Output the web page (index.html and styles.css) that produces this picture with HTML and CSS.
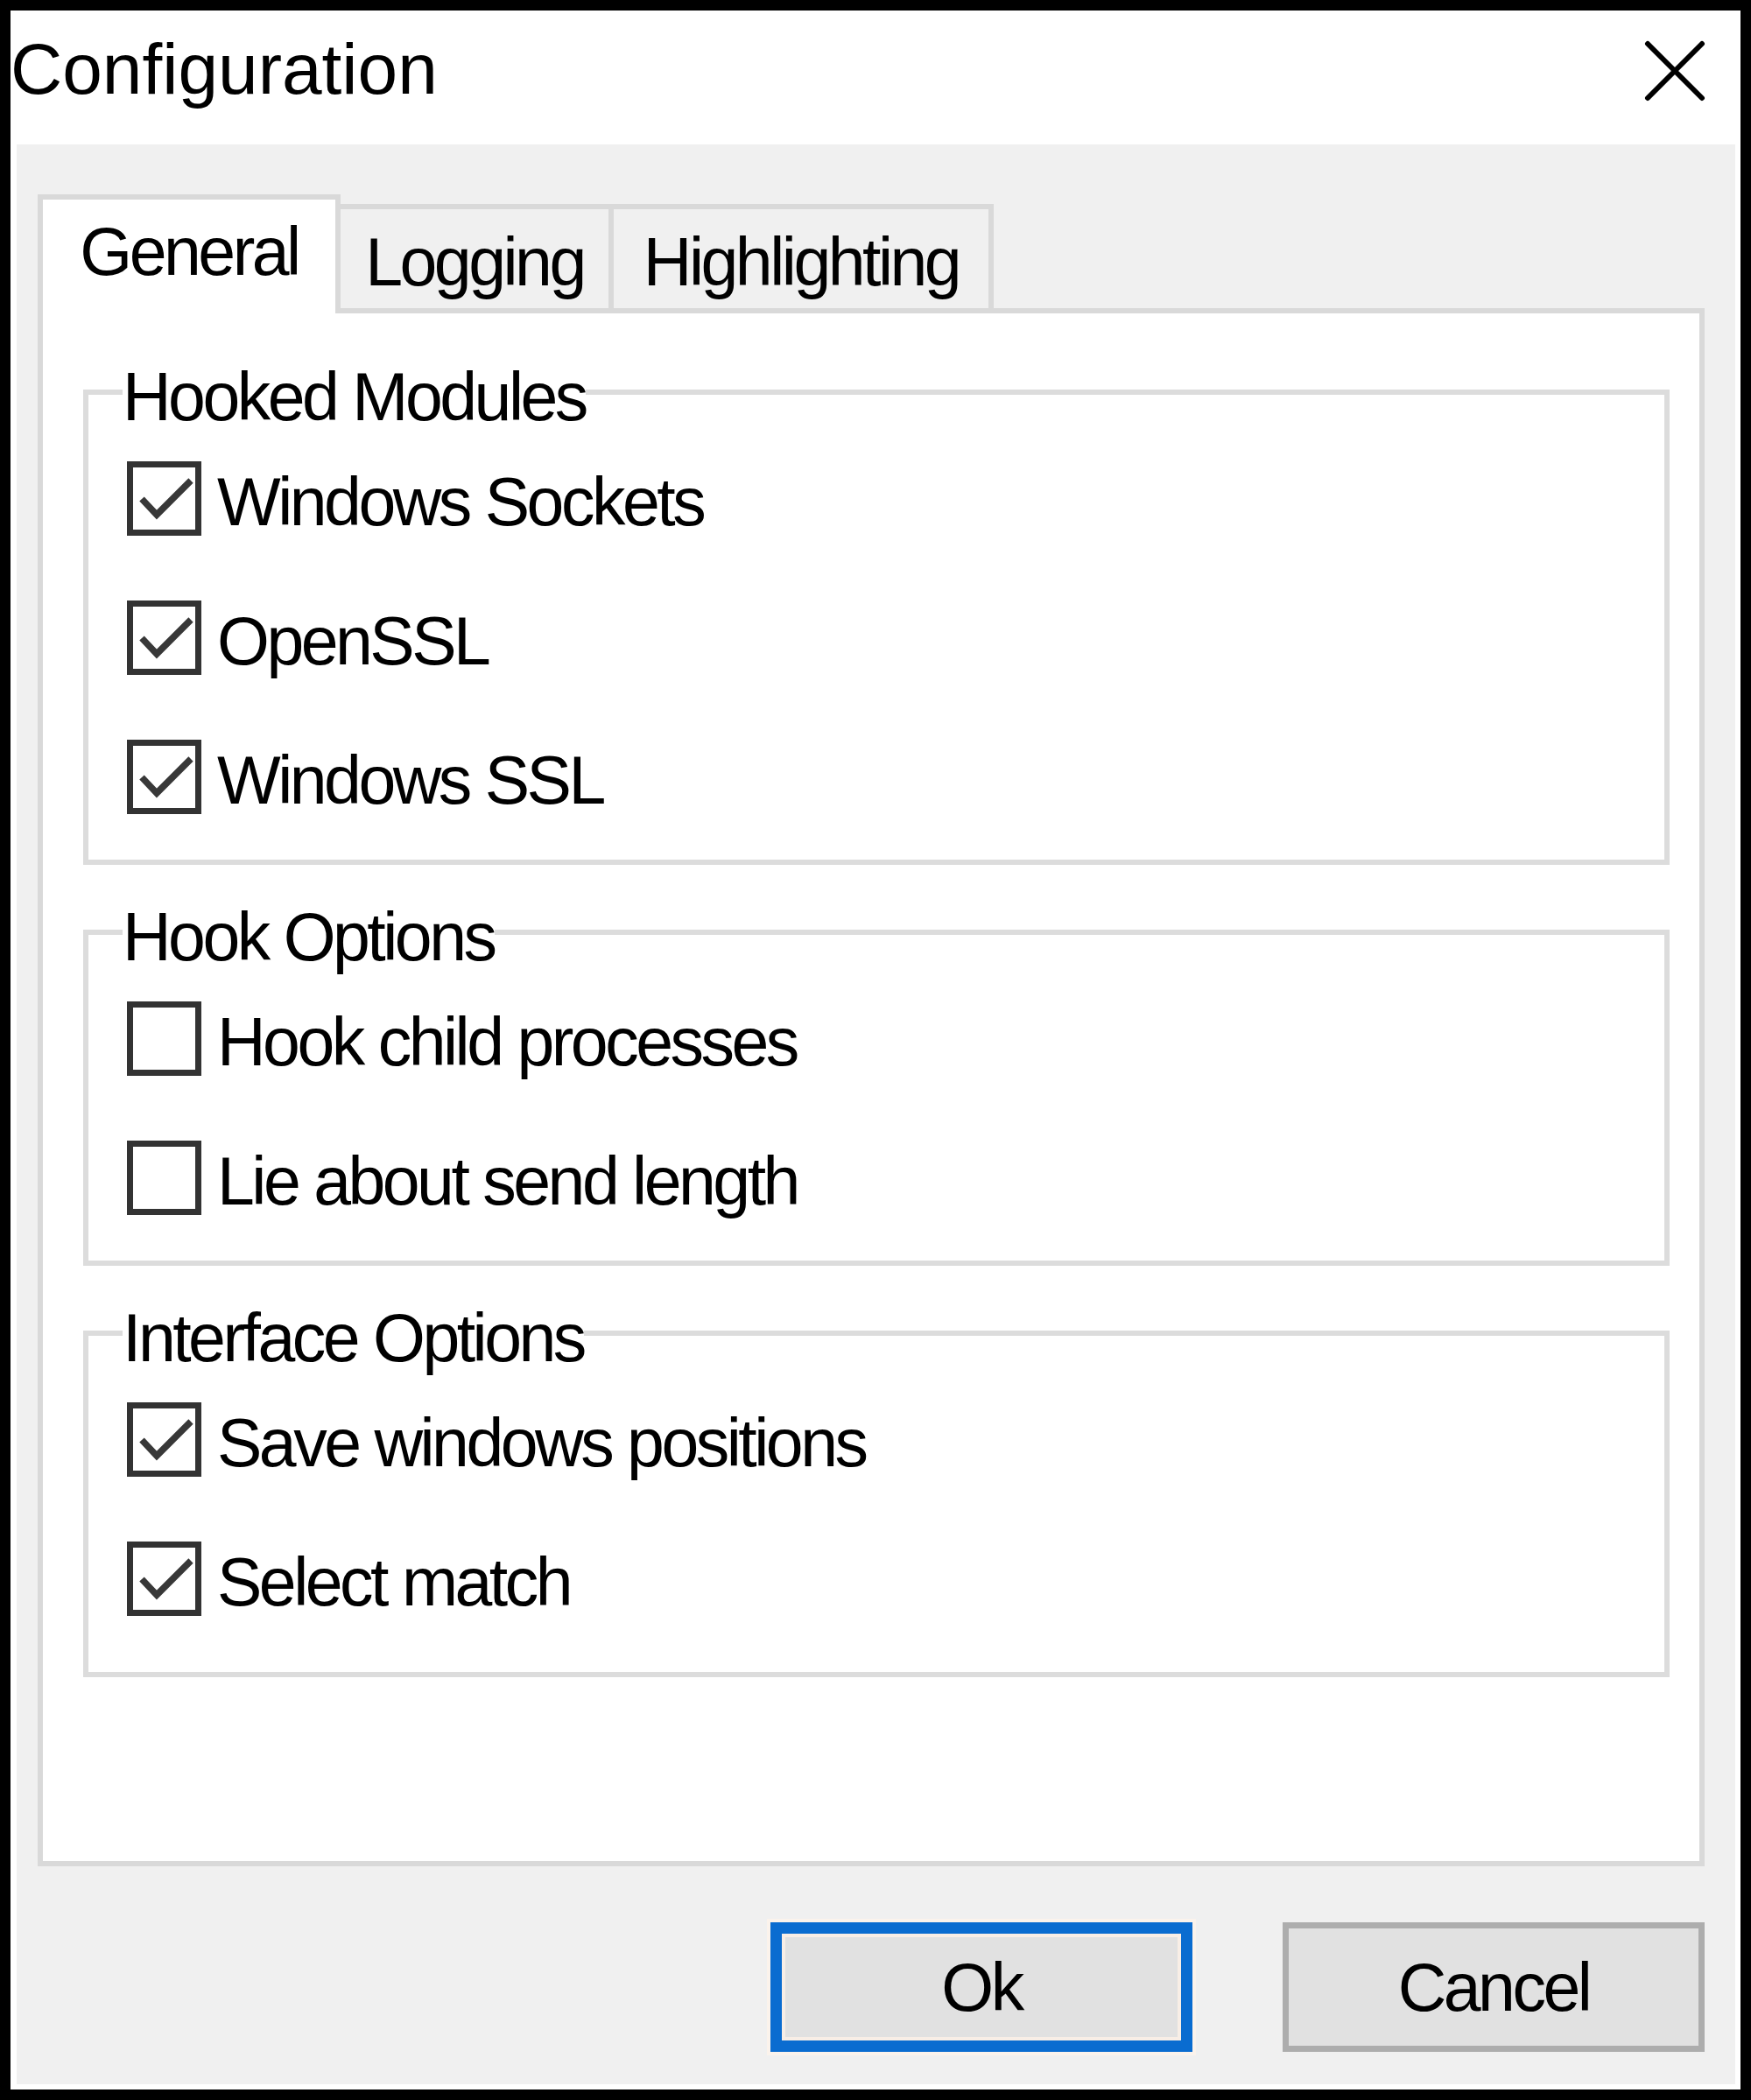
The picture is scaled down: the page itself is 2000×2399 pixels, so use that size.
FILE: index.html
```html
<!DOCTYPE html>
<html lang="en">
<head>
<meta charset="utf-8">
<title>Configuration</title>
<link rel="stylesheet" href="styles.css">
</head>
<body>
<div class="window">
  <div class="titlebar">
    <div class="title">Configuration</div>
    <svg class="close" width="70" height="70" viewBox="0 0 70 70">
      <path d="M4 4 L66 66 M66 4 L4 66" stroke="#000" stroke-width="6" stroke-linecap="round" fill="none"/>
    </svg>
  </div>
  <div class="client">
    <div class="tabs">
      <div class="tab active">General</div>
      <div class="tab logging">Logging</div>
      <div class="tab highlighting">Highlighting</div>
    </div>
    <div class="panel">
      <fieldset class="group">
        <legend>Hooked Modules</legend>
        <div class="rows">
          <div class="row"><span class="box"><svg class="check" width="71" height="71" viewBox="0 0 71 71"><polyline points="10,36 27,54 66,15" fill="none" stroke="#383838" stroke-width="7.5"/></svg></span><span class="label">Windows Sockets</span></div>
          <div class="row"><span class="box"><svg class="check" width="71" height="71" viewBox="0 0 71 71"><polyline points="10,36 27,54 66,15" fill="none" stroke="#383838" stroke-width="7.5"/></svg></span><span class="label">OpenSSL</span></div>
          <div class="row"><span class="box"><svg class="check" width="71" height="71" viewBox="0 0 71 71"><polyline points="10,36 27,54 66,15" fill="none" stroke="#383838" stroke-width="7.5"/></svg></span><span class="label">Windows SSL</span></div>
        </div>
      </fieldset>
      <fieldset class="group">
        <legend>Hook Options</legend>
        <div class="rows">
          <div class="row"><span class="box"></span><span class="label">Hook child processes</span></div>
          <div class="row"><span class="box"></span><span class="label">Lie about send length</span></div>
        </div>
      </fieldset>
      <fieldset class="group last">
        <legend>Interface Options</legend>
        <div class="rows">
          <div class="row"><span class="box"><svg class="check" width="71" height="71" viewBox="0 0 71 71"><polyline points="10,36 27,54 66,15" fill="none" stroke="#383838" stroke-width="7.5"/></svg></span><span class="label">Save windows positions</span></div>
          <div class="row"><span class="box"><svg class="check" width="71" height="71" viewBox="0 0 71 71"><polyline points="10,36 27,54 66,15" fill="none" stroke="#383838" stroke-width="7.5"/></svg></span><span class="label">Select match</span></div>
        </div>
      </fieldset>
    </div>
    <div class="buttons">
      <div class="btn default">Ok</div>
      <div class="btn">Cancel</div>
    </div>
  </div>
</div>
</body>
</html>
```
FILE: styles.css
```css
html, body {
  margin: 0;
  padding: 0;
  background: #000;
}

.window {
  box-sizing: border-box;
  width: 2000px;
  height: 2399px;
  border: 12px solid #000;
  background: #fff;
  display: flex;
  flex-direction: column;
  font-family: "Liberation Sans", Arial, sans-serif;
  color: #000;
}

.titlebar {
  height: 153px;
  flex: none;
  display: flex;
  justify-content: space-between;
  align-items: flex-start;
}

.title {
  margin-top: 26px;
  font-size: 82px;
  line-height: 81px;
  white-space: nowrap;
}

.close {
  margin-top: 34px;
  margin-right: 40px;
  display: block;
}

.client {
  flex: 1;
  margin: 0 6px 6px 7px;
  background: #f0f0f0;
  display: flex;
  flex-direction: column;
  font-size: 77px;
  letter-spacing: -3.5px;
}

.tabs {
  display: flex;
  align-items: flex-end;
  height: 130px;
  margin-top: 57px;
  margin-left: 24px;
}

.tab {
  box-sizing: border-box;
  line-height: 77px;
  text-align: center;
  white-space: nowrap;
  border-top: 6px solid #d9d9d9;
  border-right: 6px solid #d9d9d9;
  background: #f0f0f0;
  height: 119px;
  padding-top: 22px;
}

.tab.active {
  position: relative;
  z-index: 1;
  width: 346px;
  height: 136px;
  margin-bottom: -6px;
  background: #fff;
  border-left: 6px solid #d9d9d9;
  padding-top: 21px;
}

.tab.logging {
  width: 312px;
}

.tab.highlighting {
  width: 434px;
}

.panel {
  box-sizing: border-box;
  height: 1780px;
  flex: none;
  margin: 0 35px 0 24px;
  border: 6px solid #d9d9d9;
  background: #fff;
  padding: 45px 34px 0 46px;
  display: flex;
  flex-direction: column;
  gap: 32px;
}

.group {
  margin: 0;
  padding: 0;
  min-width: 0;
  border: 6px solid #dcdcdc;
}

.group legend {
  padding: 12px 0 0 0;
  margin-left: 39px;
  line-height: 77px;
  white-space: nowrap;
}

.rows {
  display: flex;
  flex-direction: column;
  gap: 74px;
  padding: 35px 0 52px 44px;
}

.group.last .rows {
  padding-bottom: 64px;
}

.row {
  display: flex;
  align-items: flex-start;
  gap: 18px;
}

.box {
  box-sizing: border-box;
  width: 85px;
  height: 85px;
  flex: none;
  border: 7px solid #333;
  background: #fff;
}

.check {
  display: block;
}

.label {
  line-height: 77px;
  padding-top: 8px;
  white-space: nowrap;
}

.buttons {
  display: flex;
  justify-content: flex-end;
  gap: 103px;
  margin: 64px 35px 0 0;
}

.btn {
  box-sizing: border-box;
  width: 482px;
  height: 148px;
  background: #e1e1e1;
  border: 7px solid #adadad;
  display: flex;
  align-items: center;
  justify-content: center;
  line-height: 77px;
}

.btn.default {
  border: 13px solid #0a6cd0;
  box-shadow: inset 0 0 0 4px #f8eee6, 0 0 0 4px #fbf3ec;
}
```
